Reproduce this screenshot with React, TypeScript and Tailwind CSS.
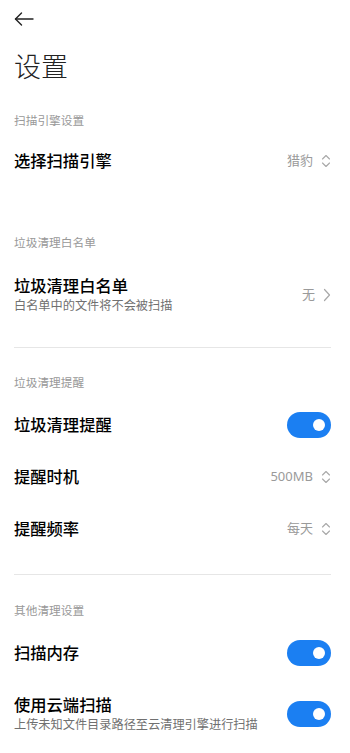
const font = { fontFamily: '"Noto Sans", "Noto Sans CJK SC", sans-serif' };

function UpDown() {
  return (
    <svg width="10" height="14" viewBox="0 0 10 14" fill="none" stroke="#a8a8a8" strokeWidth="1.1" strokeLinecap="round" strokeLinejoin="round">
      <path d="M1.5 5 L5 1.5 L8.5 5" />
      <path d="M1.5 9 L5 12.5 L8.5 9" />
    </svg>
  );
}

function Chevron() {
  return (
    <svg width="8" height="14" viewBox="0 0 8 14" fill="none" stroke="#a8a8a8" strokeWidth="1.2" strokeLinecap="round" strokeLinejoin="round">
      <path d="M1.5 1.5 L6.5 7 L1.5 12.5" />
    </svg>
  );
}

function Toggle() {
  return (
    <div className="w-[44px] h-[26px] rounded-full bg-[#1b7ff2] flex items-center justify-end pr-[6px]">
      <div className="w-[12px] h-[12px] rounded-full bg-white" />
    </div>
  );
}

function Header({ text, className = '' }: { text: string; className?: string }) {
  return (
    <div className={`flex items-center text-[11.7px] text-[#999999] ${className}`}>{text}</div>
  );
}

function Row({ title, sub, right, className = 'h-[52px]' }: { title: string; sub?: string; right: React.ReactNode; className?: string }) {
  return (
    <div className={`flex items-center justify-between ${className}`}>
      <div className="flex flex-col">
        <div className="text-[16.3px] leading-[22px] font-medium text-black">{title}</div>
        {sub && <div className="text-[12.2px] leading-[18px] text-[#707070]">{sub}</div>}
      </div>
      {right}
    </div>
  );
}

function Value({ text, icon = 'updown' }: { text: string; icon?: 'updown' | 'chevron' }) {
  return (
    <div className="flex items-center gap-[8px] text-[13px] text-[#9a9a9a]">
      <span>{text}</span>
      {icon === 'updown' ? <UpDown /> : <Chevron />}
    </div>
  );
}

export default function App() {
  return (
    <div className="w-[350px] h-[753px] bg-white pl-[14px] pr-[19px] overflow-hidden" style={font}>
      <div className="h-[38px] flex items-center">
        <svg width="20" height="14" viewBox="0 0 20 14" fill="none" stroke="#222" strokeWidth="1.4" strokeLinecap="round" strokeLinejoin="round">
          <path d="M19 7 H1.5" />
          <path d="M7.5 1 L1.5 7 L7.5 13" />
        </svg>
      </div>
      <div className="h-[58px] flex items-center text-[27px] font-light text-[#222]">设置</div>

      <Header text="扫描引擎设置" className="h-[39px] pt-[10px]" />
      <Row title="选择扫描引擎" right={<Value text="猎豹" />} />
      <div className="h-[31px]" />

      <Header text="垃圾清理白名单" className="h-[39px] pt-[10px]" />
      <Row title="垃圾清理白名单" sub="白名单中的文件将不会被扫描" right={<Value text="无" icon="chevron" />} className="h-[76px]" />
      <div className="mt-[14px] h-px bg-[#e6e6e6]" />

      <Header text="垃圾清理提醒" className="h-[51px] pt-[19px]" />
      <Row title="垃圾清理提醒" right={<Toggle />} />
      <Row title="提醒时机" right={<Value text="500MB" />} />
      <Row title="提醒频率" right={<Value text="每天" />} />
      <div className="mt-[19px] h-px bg-[#e6e6e6]" />

      <Header text="其他清理设置" className="h-[52px] pt-[20px]" />
      <Row title="扫描内存" right={<Toggle />} />
      <Row title="使用云端扫描" sub="上传未知文件目录路径至云清理引擎进行扫描" right={<Toggle />} className="h-[70px]" />
    </div>
  );
}
